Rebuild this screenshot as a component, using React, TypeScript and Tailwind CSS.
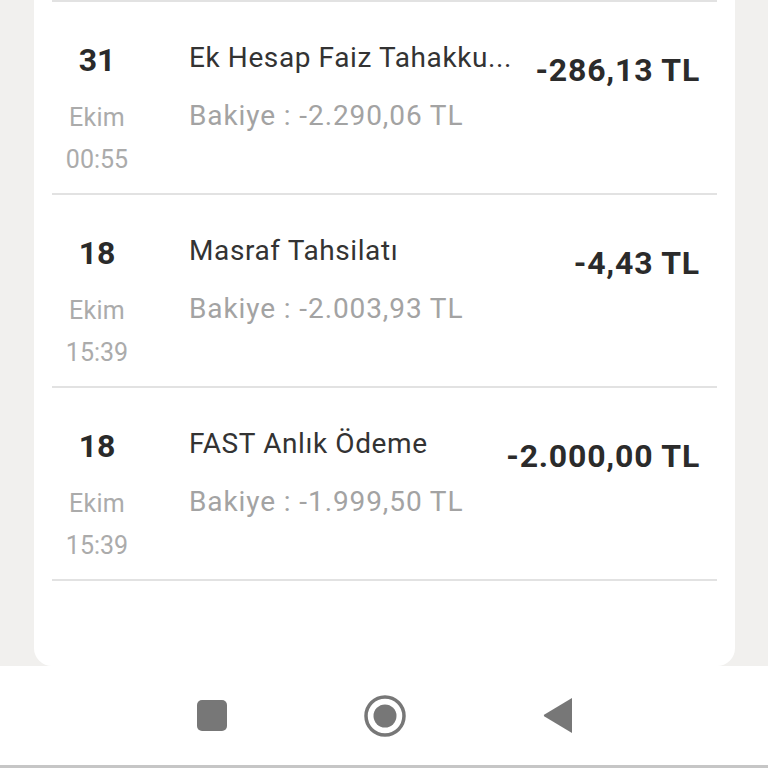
import React from "react";

type Tx = {
  day: string;
  month: string;
  time: string;
  title: string;
  balance: string;
  amount: string;
};

const TRANSACTIONS: Tx[] = [
  {
    day: "31",
    month: "Ekim",
    time: "00:55",
    title: "Ek Hesap Faiz Tahakku...",
    balance: "Bakiye : -2.290,06 TL",
    amount: "-286,13 TL",
  },
  {
    day: "18",
    month: "Ekim",
    time: "15:39",
    title: "Masraf Tahsilatı",
    balance: "Bakiye : -2.003,93 TL",
    amount: "-4,43 TL",
  },
  {
    day: "18",
    month: "Ekim",
    time: "15:39",
    title: "FAST Anlık Ödeme",
    balance: "Bakiye : -1.999,50 TL",
    amount: "-2.000,00 TL",
  },
];

const Row: React.FC<{ tx: Tx }> = ({ tx }) => (
  <div className="flex h-[191px] border-b-2 border-[#e2e2e2] box-content">
    <div className="w-[90px] shrink-0 flex flex-col items-center">
      <span className="mt-[40px] text-[32px] leading-[36px] font-bold text-[#2a2a2a]">
        {tx.day}
      </span>
      <span className="mt-[24px] text-[25px] leading-[32px] tracking-[0.3px] text-[#ababab]">
        {tx.month}
      </span>
      <span className="mt-[10px] text-[25px] leading-[32px] text-[#ababab]">
        {tx.time}
      </span>
    </div>
    <div className="ml-[47px] flex-1 min-w-0 pr-[20px] flex flex-col">
      <span className="mt-[40px] text-[28px] leading-[32px] tracking-[0.6px] text-[#333333] whitespace-nowrap">
        {tx.title}
      </span>
      <span className="mt-[26px] text-[28px] leading-[32px] tracking-[0.9px] text-[#a3a3a3] whitespace-nowrap">
        {tx.balance}
      </span>
    </div>
    <div className="shrink-0 pr-[17px]">
      <div className="mt-[50px] text-[32px] leading-[36px] tracking-[0.8px] font-bold text-[#2b2b2b]">
        {tx.amount}
      </div>
    </div>
  </div>
);

const NavBar: React.FC = () => (
  <div className="h-[102px] bg-white border-b-[3px] border-[#c6c6c6] flex items-center justify-center gap-[137px]">
    <div className="w-[30px] h-[31px] rounded-[5px] bg-[#777777]" />
    <svg width="42" height="42" viewBox="0 0 42 42">
      <circle cx="21" cy="21" r="19" fill="none" stroke="#777777" strokeWidth="3.5" />
      <circle cx="21" cy="21" r="11.5" fill="#777777" />
    </svg>
    <svg width="29" height="35" viewBox="0 0 29 35">
      <path d="M29 0 L29 35 L1.5 18.5 Q0 17.5 1.5 16.5 Z" fill="#777777" />
    </svg>
  </div>
);

export default function App() {
  return (
    <div
      className="w-[768px] h-[768px] flex flex-col bg-[#f1f0ee] overflow-hidden"
      style={{ fontFamily: "Roboto, 'Noto Sans', sans-serif" }}
    >
      <div className="h-[666px] pl-[34px] pr-[33px]">
        <div className="h-full bg-white rounded-b-[18px] px-[18px]">
          <div className="h-[2px] bg-[#e2e2e2]" />
          {TRANSACTIONS.map((tx, i) => (
            <Row key={i} tx={tx} />
          ))}
        </div>
      </div>
      <NavBar />
    </div>
  );
}
